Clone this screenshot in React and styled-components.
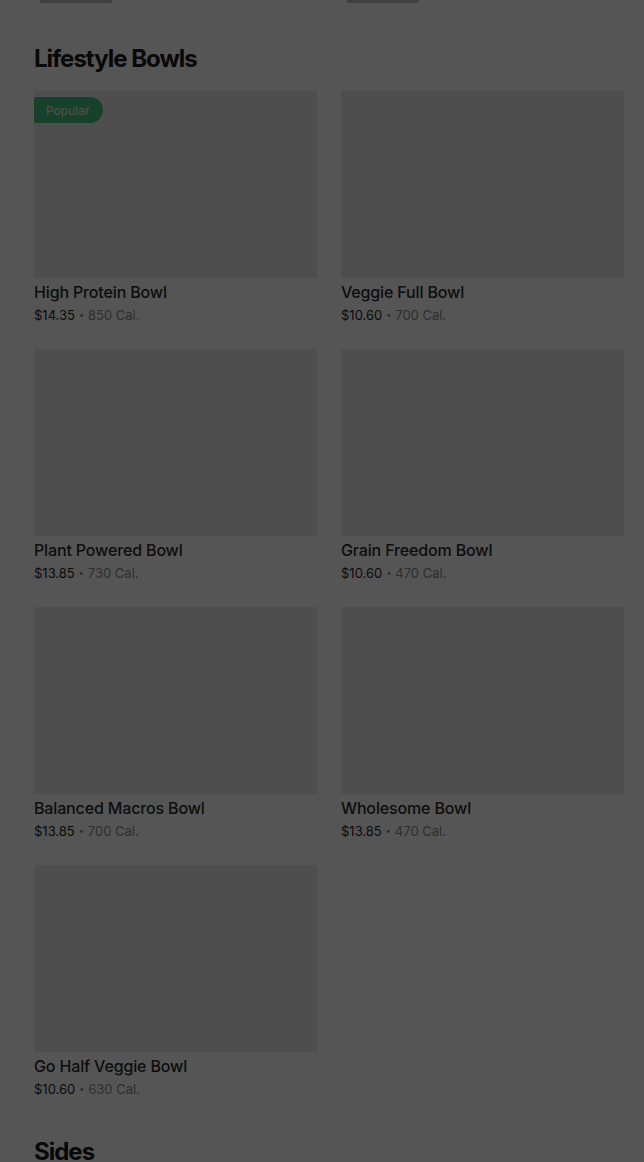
import React from 'react';
import styled, { createGlobalStyle } from 'styled-components';

const GlobalStyle = createGlobalStyle`
  html, body {
    margin: 0;
    padding: 0;
    background: #ffffff;
    font-family: Inter, "Noto Sans", "Liberation Sans", sans-serif;
    overflow: hidden;
  }
`;

const bowls = [
  { name: 'High Protein Bowl', price: '$14.35', cal: '850 Cal.', popular: true },
  { name: 'Veggie Full Bowl', price: '$10.60', cal: '700 Cal.' },
  { name: 'Plant Powered Bowl', price: '$13.85', cal: '730 Cal.' },
  { name: 'Grain Freedom Bowl', price: '$10.60', cal: '470 Cal.' },
  { name: 'Balanced Macros Bowl', price: '$13.85', cal: '700 Cal.' },
  { name: 'Wholesome Bowl', price: '$13.85', cal: '470 Cal.' },
  { name: 'Go Half Veggie Bowl', price: '$10.60', cal: '630 Cal.' },
];

const App = () => {
  return (
    <>
      <GlobalStyle />
      <Page>
        <PrevTail>
          <Stub />
          <Stub />
        </PrevTail>
        <Section $gap={40}>
          <Heading>Lifestyle Bowls</Heading>
          <Grid>
            {bowls.map((b) => (
              <Card key={b.name}>
                <Thumb>{b.popular && <Badge>Popular</Badge>}</Thumb>
                <Name>{b.name}</Name>
                <Meta>
                  <Price>{b.price}</Price>
                  <Dot>•</Dot>
                  <Cal>{b.cal}</Cal>
                </Meta>
              </Card>
            ))}
          </Grid>
        </Section>
        <Section $gap={36}>
          <Heading>Sides</Heading>
        </Section>
      </Page>
      <Backdrop />
    </>
  );
};

export default App;

const Page = styled.div`
  padding: 0 20px 0 34px;
  height: 1162px;
  overflow: hidden;
`;

const PrevTail = styled.div`
  display: grid;
  grid-template-columns: 1fr 1fr;
  column-gap: 24px;
`;

const Stub = styled.div`
  width: 72px;
  height: 3px;
  margin-left: 6px;
  background: #bdbdbd;
  border-radius: 0 0 2px 2px;
`;

const Section = styled.section`
  margin-top: ${({ $gap }) => $gap}px;
`;

const Heading = styled.h2`
  margin: 0 0 16px;
  font-size: 24px;
  line-height: 32px;
  font-weight: 700;
  letter-spacing: -1px;
  color: #1a1a1a;
`;

const Grid = styled.div`
  display: grid;
  grid-template-columns: 1fr 1fr;
  column-gap: 24px;
  row-gap: 23px;
`;

const Card = styled.div`
  display: flex;
  flex-direction: column;
`;

const Thumb = styled.div`
  position: relative;
  height: 187px;
  background: #e9e9e9;
`;

const Badge = styled.span`
  position: absolute;
  top: 6px;
  left: 0;
  height: 26px;
  padding: 0 14px 0 12px;
  display: flex;
  align-items: center;
  border-radius: 2px 13px 13px 2px;
  background: #48c283;
  color: #e8f5ec;
  font-size: 12px;
`;

const Name = styled.div`
  margin-top: 2px;
  font-size: 16px;
  line-height: 24px;
  font-weight: 500;
  letter-spacing: -0.15px;
  color: #2a2a2a;
`;

const Meta = styled.div`
  display: flex;
  align-items: center;
  font-size: 13px;
  line-height: 22px;
`;

const Price = styled.span`
  color: #1f1f1f;
`;

const Dot = styled.span`
  margin: 0 4px;
  font-size: 9px;
  color: #888;
`;

const Cal = styled.span`
  color: #8c8c8c;
`;

const Backdrop = styled.div`
  position: fixed;
  inset: 0;
  background: rgba(0, 0, 0, 0.667);
`;
